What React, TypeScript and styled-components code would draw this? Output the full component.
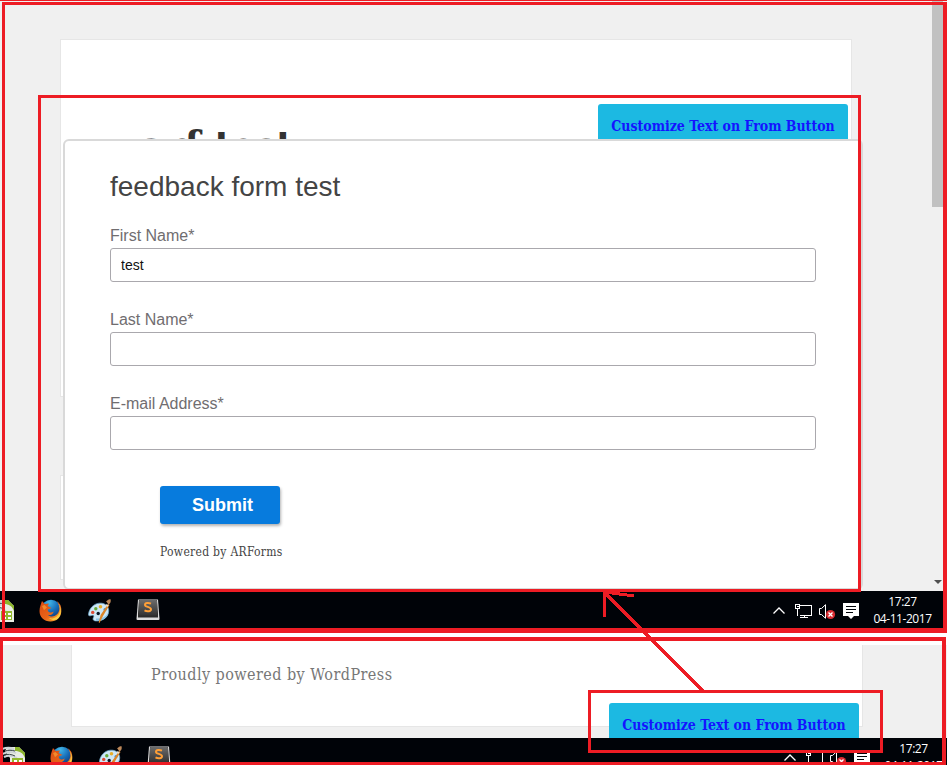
import React from "react";
import styled, { createGlobalStyle } from "styled-components";

const RED = "#ed1c24";
const SERIF = '"DejaVu Serif Condensed", "DejaVu Serif", serif';
const SANS = '"Liberation Sans", Arial, sans-serif';

const GlobalStyle = createGlobalStyle`
  * { box-sizing: border-box; }
  body { margin: 0; background: #fff; overflow: hidden; }
`;

const Page = styled.div`
  position: relative;
  display: flex;
  flex-direction: column;
  gap: 15px;
  width: 947px;
  height: 765px;
  overflow: hidden;
  background: #fff;
`;

const Screen = styled.section<{ $height: number }>`
  display: flex;
  flex-direction: column;
  height: ${(p) => p.$height}px;
  overflow: hidden;
`;

const Browser = styled.div<{ $height: number; $indent: number; $top?: number }>`
  position: relative;
  display: flex;
  flex-direction: column;
  gap: 78px;
  flex: none;
  height: ${(p) => p.$height}px;
  padding: ${(p) => p.$top ?? 0}px 0 0 ${(p) => p.$indent}px;
  background: #f0f0f0;
  overflow: hidden;
`;

const Sheet = styled.main<{ $height: number }>`
  flex: none;
  width: 792px;
  height: ${(p) => p.$height}px;
  padding: 81px 0 0 80px;
  background: #fff;
  border: 1px solid #e6e6e6;
`;

const FooterSheet = styled(Sheet)`
  border-top: 0;
  padding: 18px 0 0 79px;
`;

const PostTitle = styled.h1`
  margin: 0;
  font: bold 41px/50px ${SERIF};
  letter-spacing: 0.1px;
  color: #333;
`;

const Credit = styled.p`
  margin: 0;
  font: 16px/24px ${SERIF};
  letter-spacing: 0.44px;
  color: #777;
  white-space: nowrap;
`;

const FormTab = styled.button<{ $x: number; $y: number }>`
  position: absolute;
  left: ${(p) => p.$x}px;
  top: ${(p) => p.$y}px;
  width: 250px;
  height: 44px;
  padding: 0;
  border: 0;
  border-radius: 3px;
  background: #1cb9e2;
  color: #1414ff;
  font: bold 14px/44px ${SERIF};
  letter-spacing: -0.02px;
  white-space: nowrap;
`;

const Modal = styled.form`
  position: absolute;
  left: 63px;
  top: 139px;
  display: flex;
  flex-direction: column;
  width: 800px;
  height: 451px;
  padding: 30px 45px 0;
  background: #fff;
  border: 2px solid #d9d9d9;
  border-radius: 6px;
  font-family: ${SANS};
`;

const FormTitle = styled.h2`
  margin: 0 0 21px;
  font-size: 28px;
  line-height: 32px;
  font-weight: 400;
  color: #444;
`;

const Field = styled.label`
  display: flex;
  flex-direction: column;
  gap: 1px;
  height: 84px;
  font-size: 16px;
  line-height: 23px;
  color: #706d70;
`;

const Input = styled.input`
  width: 706px;
  height: 34px;
  padding: 0 10px;
  border: 1px solid #aaa8ad;
  border-radius: 3px;
  background: #fff;
  color: #111;
  font: 14px ${SANS};
  outline: none;
`;

const Actions = styled.div`
  display: flex;
  flex-direction: column;
  align-items: flex-start;
  gap: 18px;
  padding: 10px 0 0 50px;
`;

const Submit = styled.button`
  width: 120px;
  height: 38px;
  padding: 0 0 0 5px;
  border: 0;
  border-radius: 3px;
  background: #077bdd;
  box-shadow: 1px 2px 3px rgba(0, 0, 0, 0.3);
  color: #fff;
  font: bold 18px ${SANS};
`;

const Powered = styled.span`
  font: 12px/20px ${SERIF};
  letter-spacing: 0.29px;
  color: #444;
  white-space: nowrap;
`;

const ScrollThumb = styled.div`
  position: absolute;
  top: 0;
  right: 4px;
  width: 11px;
  height: 207px;
  background: #c1c1c1;
`;

const ScrollArrow = styled.div`
  position: absolute;
  top: 580px;
  right: 5px;
  border: 4px solid transparent;
  border-top-color: #505050;
  border-bottom: 0;
`;

const Taskbar = styled.footer<{ $indent: number }>`
  display: flex;
  flex: none;
  justify-content: space-between;
  width: ${(p) => 942 + p.$indent}px;
  height: 40px;
  padding-left: ${(p) => p.$indent}px;
  background: #000308;
  box-shadow: 10px 0 #000308;
`;

const Apps = styled.div`
  display: flex;
  gap: 24px;
  padding: 8px 0 0;
  margin-left: -9px;
`;

const Tray = styled.div`
  display: flex;
  align-items: flex-start;
`;

const TrayIcons = styled.svg`
  width: 90px;
  height: 40px;
`;

const Clock = styled.time`
  display: flex;
  flex-direction: column;
  align-items: center;
  width: 79px;
  padding-top: 2px;
  color: #fff;
  font: 12px/17px "Open Sans", "Noto Sans", sans-serif;
  letter-spacing: -0.45px;
`;

const Marker = styled.div<{ $x: number; $y: number; $w: number; $h: number; $edges?: string }>`
  position: absolute;
  left: ${(p) => p.$x}px;
  top: ${(p) => p.$y}px;
  width: ${(p) => p.$w}px;
  height: ${(p) => p.$h}px;
  border: solid ${RED};
  border-width: ${(p) => p.$edges ?? "3px"};
  pointer-events: none;
`;

const ArrowLayer = styled.svg`
  position: absolute;
  inset: 0;
  pointer-events: none;
`;

const OfficeIcon = () => (
  <svg width="24" height="24" viewBox="0 0 24 24">
    <path d="M5 1h12l6 6v16H8V12L3 5z" fill="#e9ede4" />
    <path d="M13 1h4l6 6v5c-2-5-5-7-10-7z" fill="#8cb52b" />
    <path d="M0 3c5-2 8-2 12 0-4 0-6 1-8 3M0 8c5-2 9-3 14-1M2 11c4-2 8-2 13 1" stroke="#cfd5d7" strokeWidth="2" fill="none" />
    <path d="M3 5c4-1 6-1 10 0M2 9c4-1 7-1 11 1" stroke="#3b4648" fill="none" />
    <path d="M10 12h11v9H10z" fill="#91b92d" />
    <path d="M12 14h3v2h-3zm5 0h3v2h-3zm-5 4h3v2h-3zm5 0h3v2h-3z" fill="#fff" />
  </svg>
);

const FirefoxIcon = () => (
  <svg width="24" height="24" viewBox="0 0 24 24">
    <defs>
      <radialGradient id="globe" cx=".4" cy=".15" r=".9">
        <stop offset="0" stopColor="#43b8ea" />
        <stop offset=".5" stopColor="#176db8" />
        <stop offset="1" stopColor="#102c69" />
      </radialGradient>
      <linearGradient id="fox" x1="0" y1="0" x2="1" y2="1">
        <stop offset="0" stopColor="#d84b13" />
        <stop offset=".55" stopColor="#e86318" />
        <stop offset="1" stopColor="#f8bd35" />
      </linearGradient>
    </defs>
    <circle cx="12" cy="10.5" r="9.8" fill="url(#globe)" />
    <path d="M3 2l2.6 3L10 4.5 8.5 7l4 2-3.8 1.5c0 3 3 3.8 6 2-1 3.8-4.2 4-6 3.2 4 4 11 1 11.7-5.7.3-3-.8-5.6-2.8-8 4 2.8 5 6 4.7 10.5C22 18.5 17.5 22.5 11.5 22.5 5 22.5.5 18 .5 12 .5 8 2 5 3 2z" fill="url(#fox)" />
    <path d="M19 4.5c2 3 2.4 6 1.5 9-1.5 5-6.7 7-10.5 5.5 4 3.5 9 2.5 11-2.2 1.5-4 1-9-2-12.3z" fill="#f9cf43" />
    <path d="M3 7l2.5-1L8 8.5l-3 2.8z" fill="#f28a2c" />
  </svg>
);

const PaintIcon = () => (
  <svg width="25" height="25" viewBox="0 0 25 25">
    <path d="M1.5 15C2.5 8 8.5 3.5 14.5 4.2c5 .5 8 4.5 7 9.3-1.2 6-7.5 9-13 8.4-3.3-.5-2.6-2.5-1.8-3.9.8-1.6-.7-2-2.2-1.5-2 .7-3.2.5-3-1.5z" fill="#cee7f6" stroke="#6faed2" strokeWidth=".7" />
    <path d="M9 21.5c6 1 11-1.8 12.5-7.5-3 4-7.5 6-12.5 5.5z" fill="#8ac4e5" />
    <circle cx="5.7" cy="13.4" r="1.7" fill="#df4b35" />
    <circle cx="8.8" cy="9.8" r="1.7" fill="#67ab3c" />
    <circle cx="13.5" cy="7.8" r="1.8" fill="#e8ae29" />
    <circle cx="11.2" cy="14.5" r="1.7" fill="#0d1a28" />
    <circle cx="18" cy="10.5" r="1.5" fill="#3b8dc7" />
    <path d="M21 5l1.5 1-6.5 11-3.5 7-.8-.4 1.9-7.6z" fill="#dd8628" />
    <path d="M19 2c1.5.2 1.5-1.8 4.6-1.7.5 2.5-.2 4-2 5.5z" fill="#bd895a" />
    <path d="M19.5 5l2 1.2-1 1.8-2-1.3z" fill="#e7e0ce" />
  </svg>
);

const SublimeIcon = () => (
  <svg width="24" height="24" viewBox="0 0 24 24">
    <defs>
      <linearGradient id="key" x2="0" y2="1">
        <stop stopColor="#6b6b6b" />
        <stop offset="1" stopColor="#333" />
      </linearGradient>
    </defs>
    <path d="M2 .5h20L23.5 20a1 1 0 0 1-1 1h-21a1 1 0 0 1-1-1z" fill="#ddd" />
    <path d="M3 1h18l1 14v3.5H2V15z" fill="#2c2c2c" />
    <rect x="3" y="1" width="18" height="15.5" rx="1" fill="url(#key)" />
    <path d="M15 4.7c-2-1-6-1.3-6 1.2 0 2.3 6 1.6 6 4.3 0 2.4-4 2.5-6.5 1.2" fill="none" stroke="#ff9f36" strokeWidth="2" />
  </svg>
);

const WindowsTaskbar = ({ indent = 0 }: { indent?: number }) => (
  <Taskbar $indent={indent}>
    <Apps>
      <OfficeIcon />
      <FirefoxIcon />
      <PaintIcon />
      <SublimeIcon />
    </Apps>
    <Tray>
      <TrayIcons viewBox="0 0 90 40" fill="none">
        <path d="M.5 22.5L6 17l5.5 5.5" stroke="#fff" strokeWidth="1.3" />
        <g stroke="#fff" shapeRendering="crispEdges">
          <path d="M27 14.5h11.5v9.5H27M22.5 13.5h4v4h-4zM24.5 18v7M31.5 24v3M27 26.5h8" />
          <path d="M23.5 15.5h2" />
        </g>
        <path d="M46.5 17.5h2l4-3.8v13.6l-4-3.8h-2z" stroke="#fff" />
        <circle cx="57.5" cy="23.5" r="4.6" fill="#d92c32" />
        <path d="M55.5 21.5l4 4m0-4l-4 4" stroke="#fff" strokeWidth="1.3" />
        <path d="M70 12h16v13h-5l-3 3-3-3h-5z" fill="#fff" />
        <path d="M73 15.5h10M73 18.5h10M73 21.5h7" stroke="#000308" shapeRendering="crispEdges" />
      </TrayIcons>
      <Clock>
        <span>17:27</span>
        <span>04-11-2017</span>
      </Clock>
    </Tray>
  </Taskbar>
);

export default function App() {
  return (
    <>
      <GlobalStyle />
      <Page>
        <Screen $height={630}>
          <Browser $height={591} $indent={60} $top={39}>
            <Sheet $height={358}>
              <PostTitle>arf-test</PostTitle>
            </Sheet>
            <Sheet as="aside" $height={105} />
            <FormTab $x={598} $y={104}>Customize Text on From Button</FormTab>
            <Modal>
              <FormTitle>feedback form test</FormTitle>
              <Field>First Name*<Input defaultValue="test" /></Field>
              <Field>Last Name*<Input /></Field>
              <Field>E-mail Address*<Input /></Field>
              <Actions>
                <Submit type="button">Submit</Submit>
                <Powered>Powered by ARForms</Powered>
              </Actions>
            </Modal>
            <ScrollThumb />
            <ScrollArrow />
          </Browser>
          <WindowsTaskbar />
        </Screen>
        <Screen $height={120}>
          <Browser $height={93} $indent={71}>
            <FooterSheet $height={82}>
              <Credit>Proudly powered by WordPress</Credit>
            </FooterSheet>
            <FormTab $x={609} $y={58}>Customize Text on From Button</FormTab>
          </Browser>
          <WindowsTaskbar indent={11} />
        </Screen>

        <Marker $x={0} $y={0} $w={947} $h={1} $edges="1px 0 0" />
        <Marker $x={2} $y={2} $w={945} $h={631} $edges="3px 4px 5px 3px" />
        <Marker $x={0} $y={629} $w={4} $h={4} $edges="4px 0 0" />
        <Marker $x={0} $y={637} $w={946} $h={128} $edges="4px 4px 3px 3px" />
        <Marker $x={38} $y={95} $w={823} $h={497} />
        <Marker $x={588} $y={690} $w={295} $h={63} />
        <ArrowLayer width="947" height="765" fill="none" stroke={RED} strokeWidth="3" shapeRendering="crispEdges">
          <path d="M703 691L604.5 592.5V617M605 592l29 4" />
        </ArrowLayer>
      </Page>
    </>
  );
}
